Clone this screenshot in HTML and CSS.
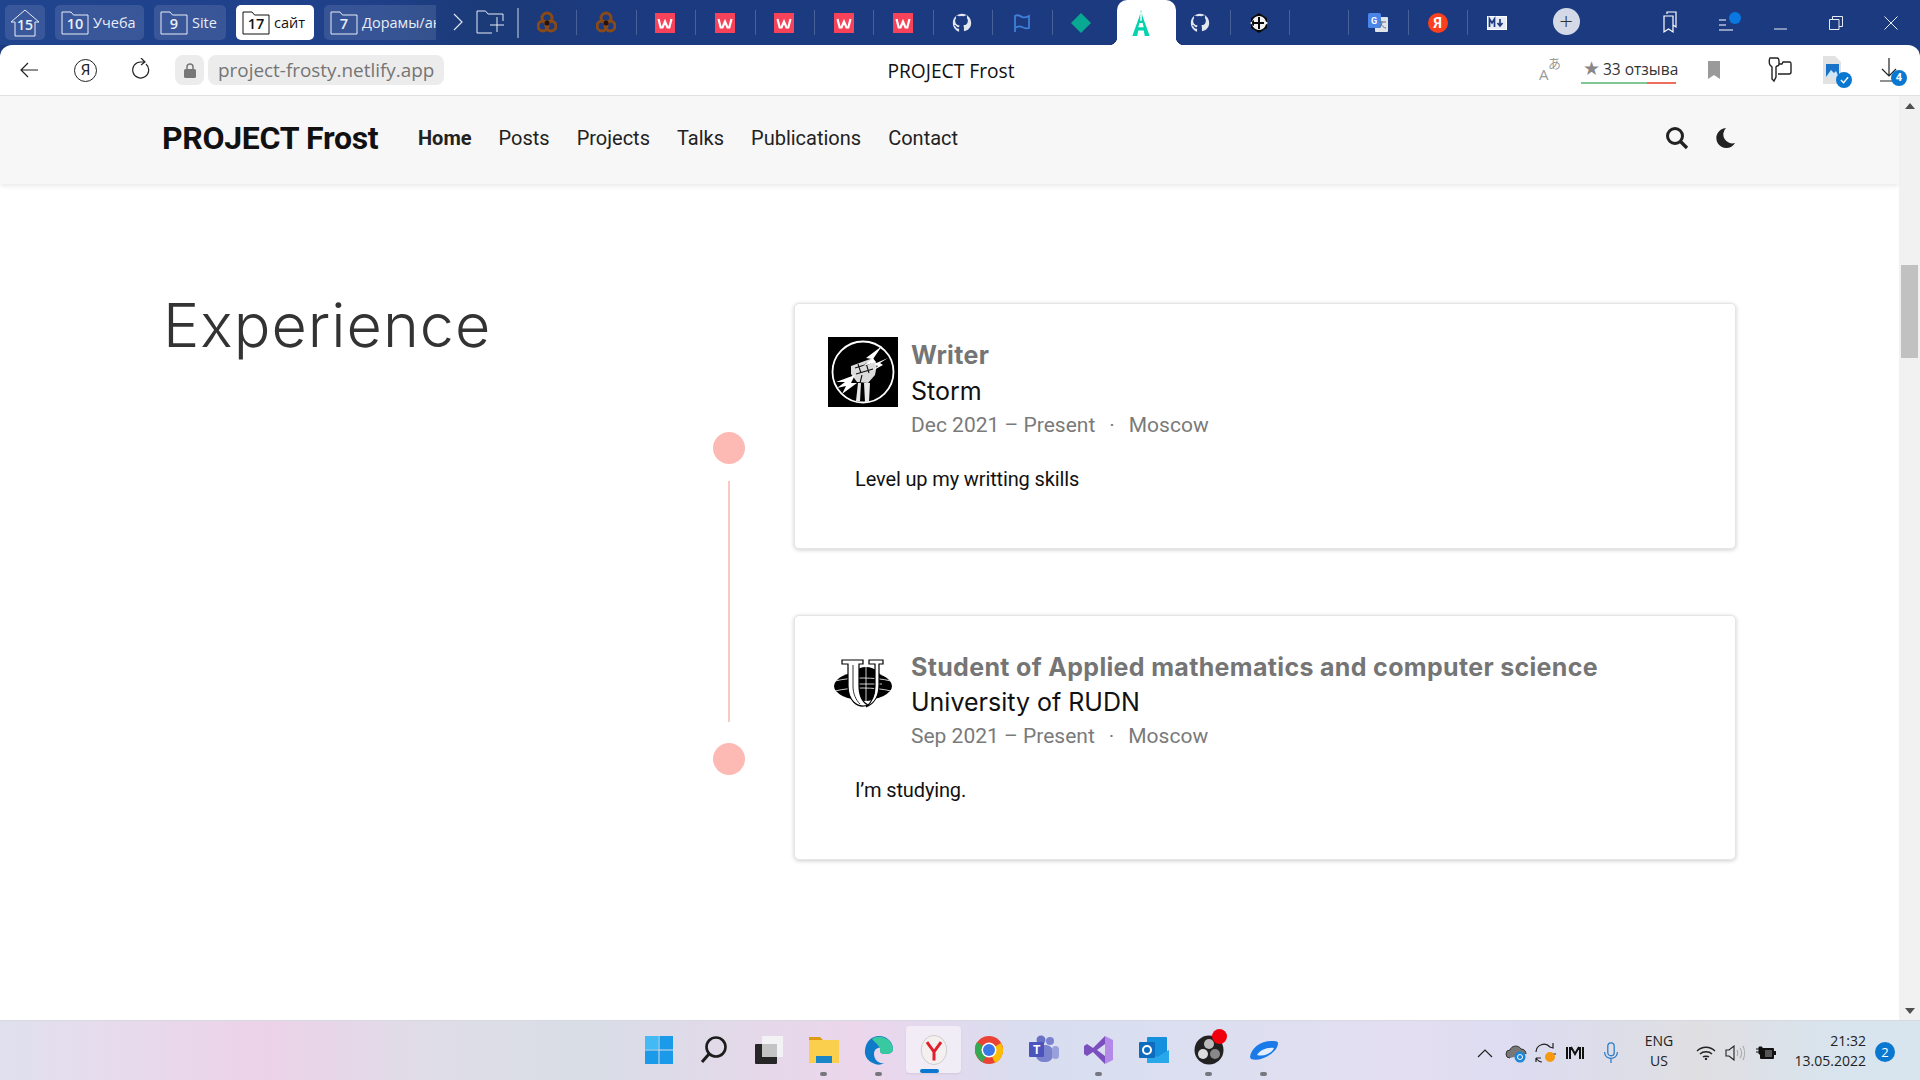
FILE: index.html
```html
<!DOCTYPE html>
<html lang="en">
<head>
  <meta charset="UTF-8" />
  <title>PROJECT Frost</title>
  <link rel="stylesheet" href="styles.css">
</head>
<body>
  <svg class="defs" width="0" height="0">
    <symbol id="folder" viewBox="0 0 28 24"><path d="M1 23V1h9l2.500 3H27v19z" fill="none" stroke="currentColor" stroke-width="1"/></symbol>
    <symbol id="wp" viewBox="0 0 20 20"><rect width="20" height="20" fill="#f8425a"/><path d="M3.500 6l2.200 8.500h1.800L10 8.500l2.500 6h1.800L16.500 6" fill="none" stroke="#fff" stroke-width="2.200"/></symbol>
    <symbol id="gh" viewBox="0 0 24 24"><path fill="#e3e7f0" d="M12 1C5.900 1 1 5.900 1 12c0 4.900 3.200 9 7.500 10.500v-3.600c-3 .6-3.700-1.300-3.900-2-.2-.4-.8-1.300-1.300-1.600-.4-.2-1-.8 0-.8.900 0 1.600.9 1.800 1.200 1 1.700 2.700 1.300 3.400 1 .1-.7.400-1.300.8-1.600-2.700-.3-5.500-1.400-5.500-6 0-1.300.5-2.400 1.200-3.200-.1-.3-.5-1.500.1-3.100 0 0 1-.3 3.300 1.200a11 11 0 0 1 6 0c2.300-1.600 3.300-1.200 3.300-1.200.7 1.600.2 2.800.1 3.100.8.800 1.200 1.900 1.200 3.200 0 4.600-2.800 5.700-5.500 6 .4.400.8 1.100.8 2.200v4.600C19.800 21 23 16.900 23 12c0-6.100-4.900-11-11-11z"/></symbol>
    <symbol id="knot" viewBox="0 0 20 24"><g fill="none" stroke="#8a4a18" stroke-width="3"><circle cx="10" cy="7" r="5"/><circle cx="6" cy="15" r="5"/><circle cx="14" cy="15" r="5"/></g><circle cx="10" cy="12" r="2.500" fill="#241208"/></symbol>
  </svg>

  <div class="tabbar">
    <div class="groups">
      <div class="group group-home">
        <svg class="home-icon" viewBox="0 0 30 30"><path d="M1 14L15 2l14 12h-4v14H5V14z" fill="none" stroke="currentColor"/></svg>
        <b class="home-num">15</b>
      </div>
      <div class="group group-10"><span class="folder"><svg><use href="#folder"/></svg><b>10</b></span>Учеба</div>
      <div class="group group-9"><span class="folder"><svg><use href="#folder"/></svg><b>9</b></span>Site</div>
      <div class="group group-17 is-open"><span class="folder"><svg><use href="#folder"/></svg><b>17</b></span>сайт</div>
      <div class="group group-7"><span class="folder"><svg><use href="#folder"/></svg><b>7</b></span><span class="clip">Дорамы/ан</span></div>
      <svg class="more" viewBox="0 0 12 20"><path d="M2 2l8 8-8 8" fill="none" stroke="#dfe5f2" stroke-width="1.200"/></svg>
      <svg class="new-group" viewBox="0 0 28 24"><path d="M27 11V4H12L9.500 1H1v22h15M21 7v15M14 15h14" fill="none" stroke="#e6ebf5" stroke-width="1"/></svg>
    </div>

    <div class="pins">
      <div class="pin pin-first"><svg class="ico20"><use href="#knot"/></svg></div>
      <div class="pin"><svg class="ico20"><use href="#knot"/></svg></div>
      <div class="pin"><svg class="ico20"><use href="#wp"/></svg></div>
      <div class="pin"><svg class="ico20"><use href="#wp"/></svg></div>
      <div class="pin"><svg class="ico20"><use href="#wp"/></svg></div>
      <div class="pin"><svg class="ico20"><use href="#wp"/></svg></div>
      <div class="pin"><svg class="ico20"><use href="#wp"/></svg></div>
      <div class="pin"><svg class="ico20"><use href="#gh"/></svg></div>
      <div class="pin"><svg class="ico20" viewBox="0 0 20 20"><path d="M3 19V3c3-2 5 0 7 1s5 0 7-1v12c-3 1-5 0-7-1s-4-1-7 1" fill="none" stroke="#3f7fd8" stroke-width="1.800"/></svg></div>
      <div class="pin pin-before"><svg class="ico20" viewBox="0 0 20 20"><path d="M10 0l10 10-10 10L0 10z" fill="#08a892"/></svg></div>
      <div class="pin pin-active"><svg class="ico24" viewBox="0 0 20 24"><path d="M10 0l1.500 6L18 24h-4.500l-1-5h-5l-1 5H2L8.500 6zM9.300 2v8h1.400V2zM8.500 12l-1 4h5l-1-4z" fill="#05d2ae" fill-rule="evenodd"/></svg></div>
      <div class="pin pin-after"><svg class="ico20"><use href="#gh"/></svg></div>
      <div class="pin"><svg class="ico20" viewBox="0 0 20 20"><path d="M10 0l8 5v10l-8 5-8-5V5z" fill="#0a0a0a"/><path d="M10 3a7 7 0 1 0 .01 0zM1 10l4-3v6zM19 10l-4-3v6z" fill="#f2f2f2"/><path d="M9 4h2v12H9zM5 9h10v2H5z" fill="#0a0a0a"/></svg></div>
      <div class="pin"></div>
      <div class="pin"><svg class="ico20" viewBox="0 0 20 20"><rect x="7" y="4" width="13" height="15" rx="1" fill="#dfe3ea"/><rect width="13" height="15" rx="1.500" fill="#4a86e8"/><text class="g-letter" x="3" y="11">G</text><path d="M11 9h7M14 8v1c0 3-2 5-3 6M13 11c1 2 3 4 5 4" fill="none" stroke="#6a7078" stroke-width="1"/></svg></div>
      <div class="pin"><span class="ya-fav">Я</span></div>
      <div class="pin"><svg class="ico20" viewBox="0 0 20 14"><rect x=".5" y=".5" width="19" height="13" fill="#e6ebf5" stroke="#fff"/><path d="M2.500 11V3l2.500 4 2.500-4v8M13 3v6M10.500 7l2.500 3 2.500-3" fill="none" stroke="#1c3a80" stroke-width="1.700"/></svg></div>
    </div>

    <div class="new-tab">+</div>

    <div class="win-controls">
      <svg class="wc wc-marks" viewBox="0 0 18 22"><path d="M6 3V1h9v15l-3-2M3 5h9v16l-4.500-3L3 21z" fill="none" stroke="#fff" stroke-width="1.200"/></svg>
      <div class="wc wc-list"><svg viewBox="0 0 16 12"><path d="M0 1h7M0 6h7M0 11h14" stroke="#fff"/></svg><i></i></div>
      <svg class="wc wc-min" viewBox="0 0 14 14"><path d="M0 13h13" stroke="#e8ecf5"/></svg>
      <svg class="wc wc-max" viewBox="0 0 14 14"><path d="M.5 3.500h9.500v10H.500zM3.500 3.500V.5h10v10H10" fill="none" stroke="#e8ecf5"/></svg>
      <svg class="wc wc-close" viewBox="0 0 14 14"><path d="M.5.5l13 13M13.500.5l-13 13" stroke="#e8ecf5"/></svg>
    </div>
  </div>

  <div class="toolbar">
    <div class="toolbar-left">
      <svg class="tool tool-back" viewBox="0 0 18 16"><path d="M8 1L1 8l7 7M1 8h17" fill="none" stroke="#222" stroke-width="1.200"/></svg>
      <span class="ya-home">Я</span>
      <svg class="tool tool-reload" viewBox="0 0 20 22"><path d="M15 6a8 8 0 1 1-5-2h3M10 0l4 4-4 3" fill="none" stroke="#222" stroke-width="1.200"/></svg>
      <div class="lock-pill"><svg viewBox="0 0 12 15"><path d="M3 6V4a3 3 0 0 1 6 0v2" fill="none" stroke="#777" stroke-width="1.500"/><rect y="6" width="12" height="9" rx="1.500" fill="#777"/></svg></div>
      <div class="url-pill">project-frosty.netlify.app</div>
    </div>
    <div class="page-title">PROJECT Frost</div>
    <div class="toolbar-right">
      <div class="translate"><small>A</small><span>あ</span></div>
      <div class="reviews"><span class="star">★</span>33 отзыва</div>
      <svg class="t-mark" viewBox="0 0 12 18"><path d="M0 0h12v18l-6-4-6 4z" fill="#9a9a9a"/></svg>
      <svg class="t-key" viewBox="0 0 24 26"><path d="M2 1h7c1 0 2 1 2 3v3c0 1-1 2-2 2l-1 1v10l-2 4-2-2V10L2 8C1 7 1 2 2 1zM11 7h3l1-2h7c1 0 1 1 1 2v8c0 1-1 2-2 2H10" fill="none" stroke="#222" stroke-width="1.400"/></svg>
      <div class="t-img">
        <svg viewBox="0 0 18 28"><path d="M0 0h12l6 6v22H0z" fill="#e2e2e2"/><rect x="3" y="8" width="13" height="13" fill="#1973c8"/><path d="M3 21l5-7 3 3 2-2 3 6z" fill="#cfe6fb"/></svg>
        <span class="check"><svg viewBox="0 0 10 8"><path d="M1 4l3 3 5-6" fill="none" stroke="#fff" stroke-width="1.500"/></svg></span>
      </div>
      <div class="t-dl">
        <svg viewBox="0 0 18 24"><path d="M9 0v18M2 11l7 7 7-7M0 23h18" fill="none" stroke="#222" stroke-width="1.200"/></svg>
        <span class="dl-count">4</span>
      </div>
    </div>
  </div>

  <div class="viewport">
    <div class="page">
      <nav class="site-nav">
        <a class="brand">PROJECT Frost</a>
        <ul class="nav-links">
          <li class="active">Home</li>
          <li>Posts</li>
          <li>Projects</li>
          <li>Talks</li>
          <li>Publications</li>
          <li>Contact</li>
        </ul>
        <div class="nav-tools">
          <svg class="nav-search" viewBox="0 0 24 24"><circle cx="10" cy="10" r="7.500" fill="none" stroke="#222" stroke-width="3"/><path d="M15.500 15.500L22 22" stroke="#222" stroke-width="3.400"/></svg>
          <svg class="nav-moon" viewBox="0 0 20 22"><path d="M10 1A10 10 0 1 0 19 16A9 9 0 0 1 10 1z" fill="#222"/></svg>
        </div>
      </nav>

      <section class="experience">
        <h1>Experience</h1>

        <div class="timeline">
          <span class="dot"></span>
          <span class="line"></span>
          <span class="dot"></span>
        </div>

        <div class="cards">
          <article class="card">
            <div class="card-head">
              <svg class="card-logo" viewBox="0 0 70 70">
                <rect width="70" height="70" fill="#000"/>
                <circle cx="35" cy="35" r="30.500" fill="none" stroke="#fff" stroke-width="1.800"/>
                <path d="M30 46l-2 18h4l1-18zM36 46l1 19h4l1-19z" fill="#e8e8e8"/>
                <path d="M23 29l22-8 4 6-2 11-7 8-11-1-6-8z" fill="#dcdcdc"/>
                <path d="M27 31l16-5M28 37l17-5M32 46l2-8M38 26l3 10M30 27l3 9" stroke="#111" stroke-width="1.100" fill="none"/>
                <path d="M54 9L38 21l6 1-9 7 13-4-3-3zM60 21L46 27l4 2-6 5 11-6-3-2zM27 38L8 45l9 0-8 6 9-2-4 8 15-11-6 0z" fill="#fff"/>
              </svg>
              <div class="card-meta">
                <h3>Writer</h3>
                <p class="company">Storm</p>
                <p class="dates">Dec 2021 – Present<span class="sep">·</span>Moscow</p>
              </div>
            </div>
            <p class="card-text">Level up my writting skills</p>
          </article>

          <article class="card">
            <div class="card-head">
              <svg class="card-logo" viewBox="0 0 70 70">
                <ellipse cx="35" cy="37" rx="29" ry="14" fill="#000"/>
                <circle cx="38" cy="35" r="17" fill="#000"/>
                <path d="M7 32c16-4 40-4 56 0M7 42c16-4 40-4 56 0M22 35h32M38 18v34" fill="none" stroke="#fff" stroke-width=".8"/>
                <path d="M14 11h21v4h-4v21c0 10 3 17 9 20-11 4-20-5-20-19V15h-6z" fill="#fff" stroke="#000" stroke-width="1.200"/>
                <path d="M41 11h14v4h-4v21c0 11-5 19-13 22 5-4 9-11 9-21V15h-6z" fill="#fff" stroke="#000" stroke-width="1.200"/>
                <path d="M25 16v21c0 8 3 14 7 18" fill="none" stroke="#000" stroke-width=".8"/>
              </svg>
              <div class="card-meta">
                <h3>Student of Applied mathematics and computer science</h3>
                <p class="company">University of RUDN</p>
                <p class="dates">Sep 2021 – Present<span class="sep">·</span>Moscow</p>
              </div>
            </div>
            <p class="card-text">I’m studying.</p>
          </article>
        </div>
      </section>
    </div>

    <div class="scrollbar">
      <span class="sb-up"></span>
      <div class="sb-track"><div class="sb-thumb"></div></div>
      <span class="sb-down"></span>
    </div>
  </div>

  <div class="taskbar">
    <div class="task-icons">
      <div class="task"><svg viewBox="0 0 30 30"><path fill="#1a9ae8" d="M1 1h13.500v13.500H1zM15.500 1H29v13.500H15.500zM1 15.500h13.500V29H1zM15.500 15.500H29V29H15.500z"/><path fill="#5fd0fb" d="M1 1h13.500v13.500H1z" opacity=".6"/></svg></div>
      <div class="task"><svg viewBox="0 0 30 30"><circle cx="17" cy="12" r="9.500" fill="none" stroke="#1c1c1c" stroke-width="2.600"/><path d="M10 19l-7 8" stroke="#1c1c1c" stroke-width="3"/></svg></div>
      <div class="task"><svg viewBox="0 0 30 30"><rect x="8" y="1" width="21" height="21" fill="#f3f3f5"/><rect x="1" y="9" width="22" height="20" rx="1" fill="#262626"/><rect x="8" y="9" width="15" height="13" fill="#c4c4c4"/></svg></div>
      <div class="task has-dot"><svg viewBox="0 0 30 30"><path d="M0 2h11l3 3H0z" fill="#e09a10"/><rect y="5" width="30" height="23" fill="#fbcf4e"/><rect x="7" y="21" width="16" height="7" fill="#1a86c8"/></svg></div>
      <div class="task has-dot"><svg viewBox="0 0 30 30"><path d="M1 15C2 6 8 1 15 1c8 0 14 6 14 13 0 4-4 5-8 5-3 0-5-1-5-3 0-1 1-2 1-3-3-1-7 1-7 6 0 5 4 10 10 9-3 2-6 2-9 1C5 27 0 22 1 15z" fill="#0f7ac8"/><path d="M8 4c6-5 20-2 21 10 0 4-4 5-8 5-3 0-5-1-5-3 1-5-6-9-8-12z" fill="#38c9a0"/></svg></div>
      <div class="task is-current"><svg viewBox="0 0 30 34"><ellipse cx="15" cy="17" rx="14.500" ry="16.500" fill="#f5f0f0" stroke="#c8c8c8"/><path d="M7 8l8 11 8-11M15 19v10" fill="none" stroke="#e0202c" stroke-width="3.400"/></svg></div>
      <div class="task"><svg viewBox="0 0 30 30"><circle cx="15" cy="15" r="14" fill="#ea4335"/><path d="M15 15L27 8a14 14 0 0 1-6 20z" fill="#fbbc05"/><path d="M15 15l-6 12A14 14 0 0 1 3 7z" fill="#34a853"/><circle cx="15" cy="15" r="7.500" fill="#fff"/><circle cx="15" cy="15" r="6" fill="#3b78e7"/></svg></div>
      <div class="task"><svg viewBox="0 0 30 30"><circle cx="21" cy="6" r="4" fill="#7b83cf"/><circle cx="12" cy="5" r="4.500" fill="#6a70c4"/><rect x="7" y="10" width="17" height="17" rx="7" fill="#7b83cf"/><rect x="23" y="11" width="7" height="13" rx="3.500" fill="#9aa0dc"/><rect y="7" width="15" height="15" rx="1" fill="#4b53bc"/><text class="teams-t" x="4" y="19">T</text></svg></div>
      <div class="task has-dot"><svg viewBox="0 0 30 30"><path d="M21 1l8 4v20l-8 4z" fill="#b48ae8"/><path d="M21 1L9 13 3 9l-3 2v8l3 2 6-4 12 12v-8l-8-6 8-6z" fill="#7b4fbd"/></svg></div>
      <div class="task"><svg viewBox="0 0 30 30"><rect x="8" y="2" width="20" height="24" rx="1" fill="#1490df"/><path d="M8 15l10 7 12-7v13H8z" fill="#28a8ea"/><rect y="7" width="16" height="16" rx="1" fill="#0f6cbd"/><circle cx="8" cy="15" r="4" fill="none" stroke="#fff" stroke-width="2"/></svg></div>
      <div class="task has-dot has-alert"><svg viewBox="0 0 30 30"><circle cx="15" cy="15" r="14.500" fill="#222"/><circle cx="15" cy="9" r="5" fill="#bbb"/><circle cx="9" cy="19" r="5" fill="#ddd"/><circle cx="21" cy="19" r="5" fill="#888"/></svg></div>
      <div class="task has-dot"><svg viewBox="0 0 30 30"><path d="M1 22C2 13 12 5 25 6c3 0 4 1 4 2 0 4-3 8-7 11-7 5-15 7-20 5z" fill="#1a7ae8"/><path d="M8 20c3-5 10-8 17-7-2 5-10 9-17 7z" fill="#e4eefc"/></svg></div>
    </div>

    <div class="tray">
      <svg class="tray-i chevron" viewBox="0 0 16 10"><path d="M1 9l7-7 7 7" fill="none" stroke="#222" stroke-width="1.200"/></svg>
      <svg class="tray-i cloud" viewBox="0 0 22 20"><path d="M5 15a4 4 0 0 1 0-8c1-4 8-6 11-1 3 0 5 2 5 5" fill="#777" stroke="#333"/><circle cx="15" cy="14" r="5.500" fill="#1a86d8"/><circle cx="15" cy="14" r="2.500" fill="none" stroke="#fff"/></svg>
      <svg class="tray-i sync" viewBox="0 0 22 22"><path d="M1 10a8 8 0 0 1 14-5l3 1V1M21 12l-6 0" fill="none" stroke="#222" stroke-width="1.200"/><path d="M1 16v4M1 16h5M1 16c2 3 4 4 6 4" fill="none" stroke="#222" stroke-width="1.200"/><circle cx="15" cy="15" r="5" fill="#f59a10"/></svg>
      <svg class="tray-i mono" viewBox="0 0 18 14"><path d="M1 1v12M4 1v12M5 1l4 7 4-7M14 1v12M17 1v12" fill="none" stroke="#111" stroke-width="2"/></svg>
      <svg class="tray-i mic" viewBox="0 0 16 24"><rect x="4.500" y="1" width="7" height="14" rx="3.500" fill="none" stroke="#2a7cc8" stroke-width="1.400"/><path d="M1 11c0 9 14 9 14 0M8 18v5" fill="none" stroke="#2a7cc8" stroke-width="1.400"/></svg>
      <div class="lang">ENG<br>US</div>
      <svg class="tray-i wifi" viewBox="0 0 20 14"><path d="M1 5c5-5 13-5 18 0M4 8c3-3 9-3 12 0M7 11c1-1 5-1 6 0" fill="none" stroke="#222" stroke-width="1.300"/><circle cx="10" cy="13" r="1.200" fill="#222"/></svg>
      <svg class="tray-i speaker" viewBox="0 0 20 16"><path d="M1 5h3l5-4v14l-5-4H1z" fill="none" stroke="#222" stroke-width="1.100"/><path d="M12 5c1 2 1 4 0 6M15 3c2 3 2 7 0 10M18 1c2 4 2 10 0 14" fill="none" stroke="#aaa" stroke-width="1.100"/></svg>
      <svg class="tray-i battery" viewBox="0 0 20 14"><path d="M0 3h3M0 6h3M3 1v7h3V1z" stroke="#111" fill="#111"/><rect x="4" y="2" width="14" height="11" rx="1" fill="#111"/><rect x="9" y="4" width="7" height="7" fill="#555"/><rect x="18" y="5" width="2" height="4" fill="#111"/></svg>
      <div class="clock">21:32<br>13.05.2022</div>
      <span class="notif">2</span>
    </div>
  </div>
</body>
</html>
```

FILE: styles.css
```css
* {
  box-sizing: border-box;
}

html, body {
  margin: 0;
  height: 1080px;
  overflow: hidden;
}

body {
  display: flex;
  flex-direction: column;
  font-family: "Roboto", "Liberation Sans", sans-serif;
  background: #1c3a80;
}

.defs {
  position: absolute;
}

/* browser tabs */
.tabbar {
  height: 45px;
  display: flex;
  background: linear-gradient(90deg, #21448f 0, #1f4089 380px, #1b3a78 480px, #1c3a80 640px);
  color: #e9edf6;
  flex: none;
}

.groups {
  width: 517px;
  flex: none;
  display: flex;
  align-items: flex-start;
  padding: 5px 0 0 5px;
  position: relative;
}

.group {
  height: 35px;
  display: flex;
  align-items: center;
  gap: 4px;
  margin-right: 10px;
  padding-left: 6px;
  border-radius: 5px;
  background: rgba(255, 255, 255, 0.11);
  font-family: "Open Sans", sans-serif;
  font-size: 14.5px;
  flex: none;
  overflow: hidden;
}

.group-home {
  width: 40px;
  position: relative;
  padding-left: 5px;
}

.home-icon {
  width: 30px;
  height: 30px;
}

.home-num {
  position: absolute;
  left: 0;
  right: 0;
  top: 10px;
  text-align: center;
  font-size: 14px;
  font-weight: 600;
}

.group-10 {
  width: 89px;
}

.group-9 {
  width: 72px;
}

.group-17 {
  width: 78px;
}

.group-7 {
  width: 112px;
  border-radius: 5px 0 0 5px;
}

.is-open {
  background: #fff;
  color: #111;
}

.folder {
  position: relative;
  width: 28px;
  height: 24px;
  display: flex;
  align-items: center;
  justify-content: center;
  flex: none;
}

.folder svg {
  position: absolute;
  inset: 0;
  width: 28px;
  height: 24px;
}

.folder b {
  font-size: 14.5px;
  font-weight: 600;
  padding-top: 1px;
}

.clip {
  white-space: nowrap;
}

.more {
  width: 12px;
  height: 20px;
  margin: 7px 0 0 6px;
  flex: none;
}

.new-group {
  width: 28px;
  height: 24px;
  margin: 5px 0 0 12px;
  flex: none;
}

.pins {
  display: flex;
  flex: none;
}

.pin {
  width: 59.4px;
  height: 45px;
  display: flex;
  align-items: center;
  justify-content: center;
  position: relative;
  flex: none;
}

.pin::before {
  content: "";
  position: absolute;
  left: 0;
  top: 10px;
  height: 25px;
  width: 1px;
  background: rgba(255, 255, 255, 0.2);
}

.pin-first::before {
  top: 8px;
  height: 30px;
  width: 2px;
  background: rgba(255, 255, 255, 0.4);
}

.pin-before {
  width: 65.4px;
  padding-right: 6px;
}

.pin-active::before,
.pin-after::before {
  display: none;
}

.pin-active {
  padding-right: 12px;
  background: #fff;
  border-radius: 10px 10px 0 0;
}

.pin-after {
  width: 53.4px;
  padding-right: 6px;
}

.pin-active::after {
  content: "";
  position: absolute;
  left: -8px;
  right: -8px;
  bottom: 0;
  height: 8px;
  background:
    radial-gradient(circle at 0 0, #1c3a80 8px, #fff 8.5px) left / 8px 8px no-repeat,
    radial-gradient(circle at 100% 0, #1c3a80 8px, #fff 8.5px) right / 8px 8px no-repeat;
}

.ico20 {
  width: 20px;
  height: 24px;
}

.ico24 {
  width: 22px;
  height: 26px;
  position: relative;
  z-index: 1;
}

.g-letter {
  font-size: 9px;
  font-weight: 700;
  fill: #fff;
}

.ya-fav {
  width: 20px;
  height: 20px;
  border-radius: 50%;
  background: #fc3f1d;
  color: #fff;
  font-size: 14px;
  font-weight: 700;
  line-height: 20px;
  text-align: center;
}

.new-tab {
  width: 27px;
  height: 27px;
  margin: 8px 0 0 26px;
  border-radius: 50%;
  background: #d3d9e6;
  color: #333;
  font: 300 24px/25px "Open Sans", sans-serif;
  text-align: center;
  flex: none;
}

.win-controls {
  flex: 1;
  position: relative;
}

.wc {
  position: absolute;
}

.wc-marks {
  left: 81px;
  top: 10px;
  width: 18px;
  height: 24px;
}

.wc-list {
  left: 139px;
  top: 15px;
  width: 28px;
  height: 20px;
}

.wc-list svg {
  display: block;
  width: 16px;
  height: 12px;
  margin-top: 4px;
}

.wc-list i {
  position: absolute;
  left: 10px;
  top: -3px;
  width: 12px;
  height: 12px;
  border-radius: 50%;
  background: #0a78e0;
}

.wc-min {
  left: 194px;
  top: 16px;
  width: 14px;
  height: 14px;
}

.wc-max {
  left: 249px;
  top: 16px;
  width: 14px;
  height: 14px;
}

.wc-close {
  left: 304px;
  top: 16px;
  width: 14px;
  height: 14px;
}

/* address row */
.toolbar {
  height: 51px;
  flex: none;
  display: flex;
  align-items: center;
  position: relative;
  background: #fff;
  border-radius: 12px 12px 0 0;
  border-bottom: 1px solid #e2e2e2;
}

.toolbar-left {
  display: flex;
  align-items: center;
  padding-left: 20px;
}

.tool-back {
  width: 18px;
  height: 16px;
}

.ya-home {
  width: 23px;
  height: 23px;
  margin-left: 36px;
  border: 1.2px solid #222;
  border-radius: 50%;
  font-size: 15px;
  line-height: 21px;
  text-align: center;
  color: #222;
}

.tool-reload {
  width: 20px;
  height: 22px;
  margin: -3px 0 0 34px;
}

.lock-pill {
  width: 29px;
  height: 30px;
  margin-left: 24px;
  border-radius: 8px;
  background: #ececec;
  display: flex;
  align-items: center;
  justify-content: center;
}

.lock-pill svg {
  width: 12px;
  height: 15px;
}

.url-pill {
  width: 236px;
  height: 30px;
  margin-left: 4px;
  padding-left: 10px;
  border-radius: 8px;
  background: #ececec;
  color: #757575;
  font: 18.9px/30px "Open Sans", sans-serif;
  white-space: nowrap;
}

.page-title {
  position: absolute;
  left: 0;
  right: 0;
  top: 0;
  padding-right: 18px;
  text-align: center;
  color: #111;
  font: 19.2px/51px "Open Sans", sans-serif;
}

.toolbar-right {
  margin-left: auto;
  display: flex;
  align-items: center;
  position: relative;
  z-index: 1;
  padding-right: 22px;
}

.translate {
  width: 22px;
  height: 22px;
  position: relative;
  color: #999;
  font-family: "Noto Sans CJK JP", sans-serif;
}

.translate small {
  position: absolute;
  left: 0;
  top: 5px;
  font: 15px "Open Sans", sans-serif;
}

.translate span {
  position: absolute;
  left: 9px;
  top: -6px;
  font-size: 13px;
}

.reviews {
  width: 95px;
  height: 27px;
  margin: 0 0 0 20px;
  color: #333;
  font: 15.5px/24px "Open Sans", sans-serif;
  white-space: nowrap;
  border-bottom: 2px solid;
  border-image: linear-gradient(90deg, #7fc795 0, #7fc795 69%, #ee6e5c 69%) 1;
}

.star {
  color: #888;
  font-size: 19px;
  line-height: 20px;
  margin: 0 3px 0 2px;
}

.t-mark {
  width: 12px;
  height: 18px;
  margin-left: 32px;
}

.t-key {
  width: 24px;
  height: 26px;
  margin-left: 48px;
}

.t-img {
  width: 30px;
  height: 28px;
  margin-left: 31px;
  position: relative;
}

.t-img svg {
  height: 28px;
  width: 18px;
}

.check {
  position: absolute;
  left: 13px;
  top: 16px;
  width: 16px;
  height: 16px;
  border-radius: 50%;
  background: #0a78d0;
  display: flex;
  align-items: center;
  justify-content: center;
}

.check svg {
  width: 9px;
  height: 8px;
}

.t-dl {
  width: 18px;
  height: 24px;
  margin-left: 27px;
  position: relative;
}

.t-dl svg {
  display: block;
  width: 18px;
  height: 24px;
}

.dl-count {
  position: absolute;
  left: 11px;
  top: 12px;
  width: 16px;
  height: 16px;
  border-radius: 50%;
  background: #0a78d0;
  color: #fff;
  font-size: 11px;
  font-weight: 700;
  line-height: 16px;
  text-align: center;
}

/* page */
.viewport {
  height: 924px;
  flex: none;
  display: flex;
  background: #fff;
  overflow: hidden;
}

.page {
  flex: 1;
  min-width: 0;
}

.site-nav {
  height: 88px;
  display: flex;
  align-items: center;
  padding: 0 0 4px 162px;
  background: #f7f7f7;
  box-shadow: 0 2px 5px rgba(0, 0, 0, 0.09);
}

.brand {
  width: 256px;
  font-size: 32px;
  font-weight: 700;
  color: #111;
  letter-spacing: -0.3px;
}

.nav-links {
  display: flex;
  gap: 27px;
  list-style: none;
  margin: 0;
  padding: 0;
  font-size: 20px;
  color: #222;
}

.nav-links .active {
  font-weight: 700;
}

.nav-tools {
  margin-left: auto;
  display: flex;
  align-items: center;
  gap: 27px;
  padding-right: 163px;
}

.nav-search {
  width: 24px;
  height: 24px;
}

.nav-moon {
  width: 20px;
  height: 22px;
}

.experience {
  display: flex;
  align-items: flex-start;
  padding: 103px 0 0 163px;
}

h1 {
  width: 550px;
  margin: 0;
  color: #333;
  font-family: "Inter", sans-serif;
  font-size: 61px;
  font-weight: 300;
  line-height: 76px;
  letter-spacing: 1px;
  flex: none;
}

.timeline {
  width: 32px;
  margin-top: 145px;
  display: flex;
  flex-direction: column;
  align-items: center;
  flex: none;
}

.dot {
  width: 32px;
  height: 32px;
  border-radius: 50%;
  background: #fdbab4;
}

.line {
  width: 2px;
  height: 241px;
  margin: 17px 0 21px;
  background: #fbc9c4;
}

.cards {
  width: 942px;
  margin-left: 49px;
  margin-top: 16px;
  display: flex;
  flex-direction: column;
  gap: 66px;
  flex: none;
}

.card {
  height: 246px;
  padding: 33px 33px 0;
  background: #fff;
  border: 1px solid #e6e6e6;
  border-radius: 5px;
  box-shadow: 0 1px 4px rgba(0, 0, 0, 0.2);
}

.card:last-child {
  height: 245px;
}

.card-head {
  display: flex;
  gap: 13px;
}

.card-logo {
  width: 70px;
  height: 70px;
  flex: none;
}

.card-meta h3 {
  margin: 2px 0 0;
  color: #757575;
  font-family: "Inter", sans-serif;
  font-size: 25px;
  font-weight: 700;
  line-height: 32px;
  letter-spacing: 0.33px;
}

.company {
  margin: 2px 0 0;
  color: #111;
  font-family: "Inter", sans-serif;
  font-size: 25px;
  line-height: 34px;
}

.card:first-child .company {
  margin-top: 3px;
}

.dates {
  margin: 2px 0 0;
  color: #7a7a7a;
  font-size: 21px;
  line-height: 30px;
}

.sep {
  margin: 0 14px;
}

.card-text {
  margin: 24px 0 0 27px;
  color: #111;
  font-size: 20px;
  line-height: 30px;
  letter-spacing: -0.13px;
}

.scrollbar {
  width: 21px;
  flex: none;
  display: flex;
  flex-direction: column;
  align-items: center;
  background: #f1f1f1;
}

.sb-up,
.sb-down {
  width: 0;
  height: 0;
  margin-top: 7px;
  border-left: 5px solid transparent;
  border-right: 5px solid transparent;
  border-bottom: 6px solid #505050;
  flex: none;
}

.sb-down {
  margin: 0 0 6px;
  border-bottom: 0;
  border-top: 6px solid #505050;
}

.sb-track {
  flex: 1;
  width: 17px;
  padding-top: 156px;
}

.sb-thumb {
  height: 93px;
  background: #c1c1c1;
}

/* windows taskbar */
.taskbar {
  height: 60px;
  flex: none;
  display: flex;
  align-items: flex-start;
  background: linear-gradient(90deg, #dfe0ee 0, #e6dcee 98px, #ecd2e8 270px, #dfdde8 430px, #d8dde6 590px, #ecd6ec 857px, #d8def0 1040px, #dcdff0 1225px, #e4def2 1408px, #dcdcf0 1530px, #dfdfe2 1700px, #d8e4ee 1840px);
  border-top: 1px solid #d6d8e2;
}

.task-icons {
  display: flex;
  margin-left: 631px;
  padding-top: 5px;
}

.task {
  width: 55px;
  height: 47px;
  display: flex;
  align-items: center;
  justify-content: center;
  position: relative;
  border-radius: 4px;
  flex: none;
}

.task svg {
  width: 30px;
  height: 30px;
}

.teams-t {
  font-size: 12px;
  font-weight: 700;
  fill: #fff;
}

.has-dot::after {
  content: "";
  position: absolute;
  left: 24px;
  bottom: -3px;
  width: 7px;
  height: 4px;
  border-radius: 2px;
  background: #77777f;
}

.is-current {
  background: rgba(255, 255, 255, 0.5);
  box-shadow: 0 1px 2px rgba(0, 0, 0, 0.08);
}

.is-current::after {
  content: "";
  position: absolute;
  left: 14px;
  bottom: 0;
  width: 19px;
  height: 4px;
  border-radius: 2px;
  background: #0a78d0;
}

.has-alert::before {
  content: "";
  position: absolute;
  left: 31px;
  top: 3px;
  width: 15px;
  height: 15px;
  border-radius: 50%;
  background: #f0000c;
  z-index: 1;
}

.tray {
  margin-left: auto;
  height: 59px;
  display: flex;
  align-items: center;
  color: #222;
  font-family: "Open Sans", sans-serif;
  font-size: 14px;
  padding-right: 25px;
}

.tray-i {
  flex: none;
  margin-top: 4px;
}

.chevron {
  width: 16px;
  height: 10px;
}

.cloud {
  width: 22px;
  height: 20px;
  margin-left: 12px;
}

.sync {
  width: 22px;
  height: 22px;
  margin-left: 8px;
}

.mono {
  width: 18px;
  height: 14px;
  margin-left: 9px;
}

.mic {
  width: 16px;
  height: 22px;
  margin-left: 19px;
}

.lang {
  width: 40px;
  margin-left: 20px;
  text-align: center;
  line-height: 20px;
}

.wifi {
  width: 20px;
  height: 14px;
  margin-left: 17px;
}

.speaker {
  width: 20px;
  height: 16px;
  margin-left: 9px;
}

.battery {
  width: 20px;
  height: 14px;
  margin-left: 11px;
}

.clock {
  width: 80px;
  margin-left: 10px;
  text-align: right;
  line-height: 20px;
  white-space: nowrap;
}

.notif {
  width: 20px;
  height: 20px;
  margin: 3px 0 0 9px;
  border-radius: 50%;
  background: #0a78d0;
  color: #fff;
  font-size: 13px;
  line-height: 20px;
  text-align: center;
  flex: none;
}
```
